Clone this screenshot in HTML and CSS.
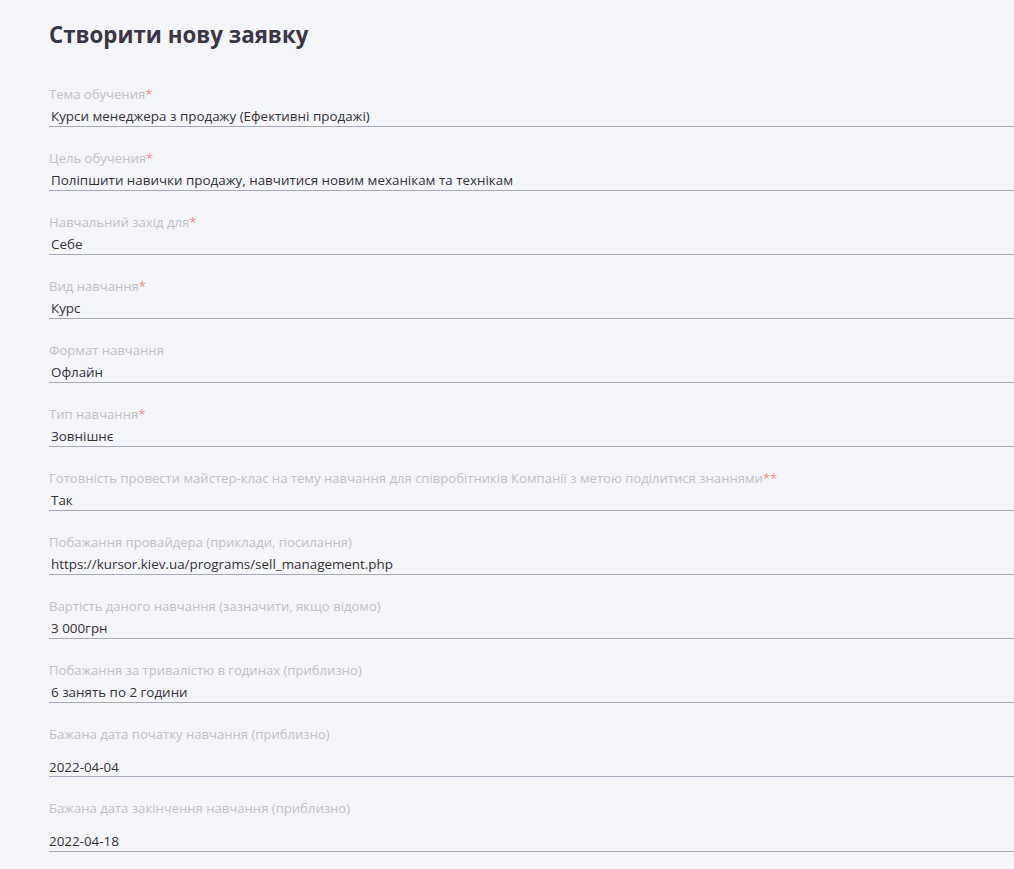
FILE: index.html
```html
<!DOCTYPE html>
<html lang="uk">

<head>
    <meta charset="UTF-8" />
    <meta name="viewport" content="width=device-width, initial-scale=1" />
    <title>Створити нову заявку</title>
    <link rel="stylesheet" href="styles.css">
</head>

<body>
    <h1>Створити нову заявку</h1>

    <form class="request-form">
        <div class="field">
            <label>Тема обучения<span class="req">*</span></label>
            <div class="value">Курси менеджера з продажу (Ефективні продажі)</div>
        </div>
        <div class="field">
            <label>Цель обучения<span class="req">*</span></label>
            <div class="value">Поліпшити навички продажу, навчитися новим механікам та технікам</div>
        </div>
        <div class="field">
            <label>Навчальний захід для<span class="req">*</span></label>
            <div class="value">Себе</div>
        </div>
        <div class="field">
            <label>Вид навчання<span class="req">*</span></label>
            <div class="value">Курс</div>
        </div>
        <div class="field">
            <label>Формат навчання</label>
            <div class="value">Офлайн</div>
        </div>
        <div class="field">
            <label>Тип навчання<span class="req">*</span></label>
            <div class="value">Зовнішнє</div>
        </div>
        <div class="field">
            <label>Готовність провести майстер-клас на тему навчання для співробітників Компанії з метою поділитися знаннями<span class="req">**</span></label>
            <div class="value">Так</div>
        </div>
        <div class="field">
            <label>Побажання провайдера (приклади, посилання)</label>
            <div class="value">https://kursor.kiev.ua/programs/sell_management.php</div>
        </div>
        <div class="field">
            <label>Вартість даного навчання (зазначити, якщо відомо)</label>
            <div class="value">3 000грн</div>
        </div>
        <div class="field">
            <label>Побажання за тривалістю в годинах (приблизно)</label>
            <div class="value">6 занять по 2 години</div>
        </div>
        <div class="field">
            <label>Бажана дата початку навчання (приблизно)</label>
            <div class="value date">2022-04-04</div>
        </div>
        <div class="field">
            <label>Бажана дата закінчення навчання (приблизно)</label>
            <div class="value date">2022-04-18</div>
        </div>
    </form>
</body>

</html>
```

FILE: styles.css
```css
:root {
    --bg: #f4f5f9;
    --title: #3b3646;
    --label: #c3bfcb;
    --text: #34313b;
    --line: #a8a7ba;
    --req: #f08a8a;
}

body {
    margin: 0;
    padding: 0 0 0 49px;
    font-family: 'Open Sans', 'Noto Sans', sans-serif;
    background-color: var(--bg);
    color: var(--text);
    overflow: hidden;
}

h1 {
    margin: 0;
    padding-top: 20px;
    font-size: 22.3px;
    line-height: 30px;
    font-weight: 700;
    color: var(--title);
}

.request-form {
    margin-top: 36px;
}

.field {
    margin-bottom: 23px;
}

.field label {
    display: block;
    font-size: 13.1px;
    line-height: 16px;
    color: var(--label);
    margin-bottom: 4px;
}

.req {
    color: var(--req);
}

.value {
    font-size: 13.4px;
    line-height: 20px;
    height: 20px;
    padding-left: 2px;
    border-bottom: 1px solid var(--line);
    white-space: nowrap;
}

.value.date {
    padding: 12px 0 0;
    line-height: 18px;
    height: 18px;
}

.field:last-child .value.date {
    height: 19px;
}
```
